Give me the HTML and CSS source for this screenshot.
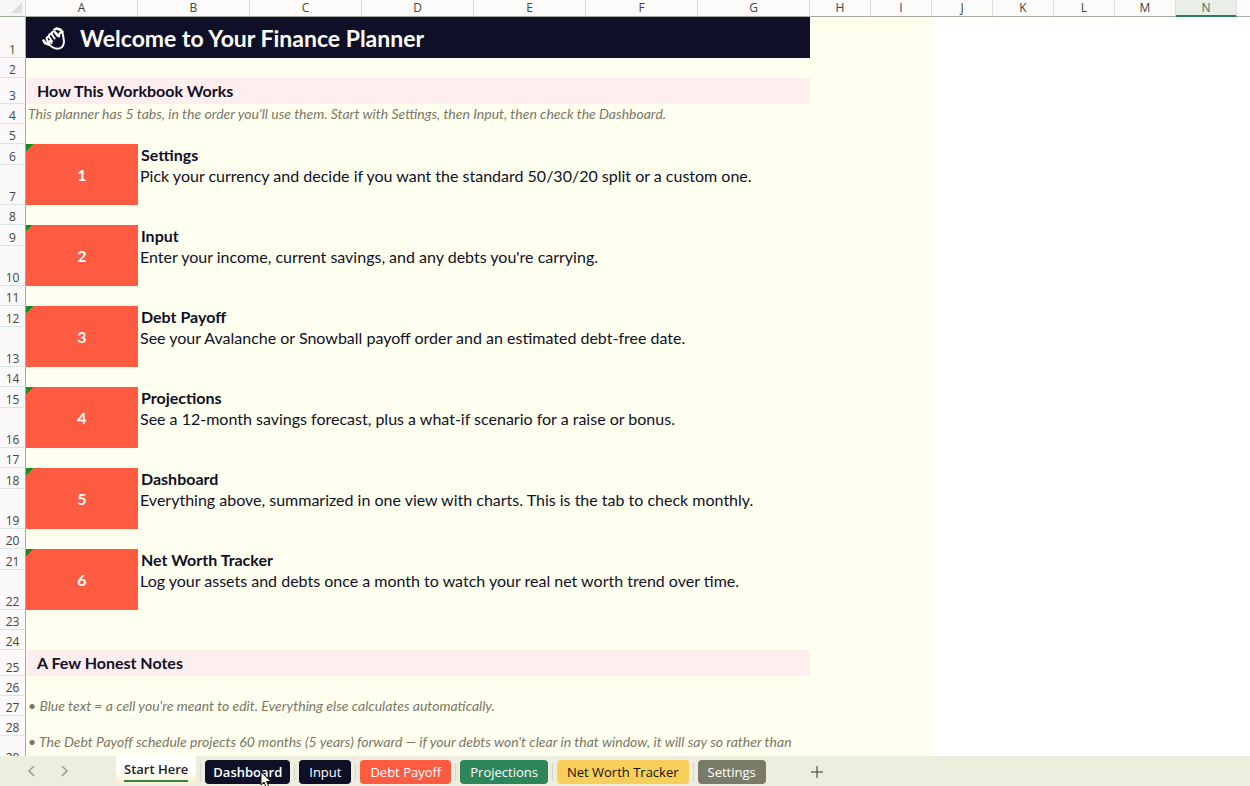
FILE: index.html
```html
<!DOCTYPE html>
<html lang="en">
<head>
    <meta charset="UTF-8">
    <meta name="viewport" content="width=device-width, initial-scale=1.0">
    <title>Finance Planner</title>
    <link rel="stylesheet" href="styles.css">
</head>
<body>
    <main class="sheet">
        <table>
            <colgroup>
                <col class="col-rows">
                <col class="col-wide" span="7">
                <col class="col-narrow" span="7">
                <col>
            </colgroup>
            <thead>
                <tr>
                    <th class="corner"></th>
                    <th>A</th>
                    <th>B</th>
                    <th>C</th>
                    <th>D</th>
                    <th>E</th>
                    <th>F</th>
                    <th>G</th>
                    <th>H</th>
                    <th>I</th>
                    <th>J</th>
                    <th>K</th>
                    <th>L</th>
                    <th>M</th>
                    <th class="selected">N</th>
                    <th></th>
                </tr>
            </thead>
            <tbody>
                <tr class="row-title">
                    <th>1</th>
                    <td class="title" colspan="7">
                        <div class="title-inner">
                            <svg class="wave" viewBox="0 0 24 24" width="24" height="24" aria-hidden="true">
                                <path d="M7 18L4.800 13.500C4 11.300 6 10 7.300 11.300C6 8.500 8.500 6.800 10 8.500C9 5.500 12 4.300 13.500 6.500L17 10.500C17 8 17.500 6.500 19.300 6.500C21 6.500 21 9 21.500 12C22.800 17 21.500 22.500 15.500 22.700C11.500 22.700 9 20.500 7 18Z" fill="#0f1028" stroke="#fff" stroke-width="2" stroke-linejoin="round"/>
                                <path d="M7.300 11.300L10 15.200M10 8.500L12.600 12.500M13 6.500L15.500 10M7.500 15L9.500 17" fill="none" stroke="#fff" stroke-width="2" stroke-linecap="round"/>
                                <path d="M12.500 3.500L14.500 2.500L18 3.500L20.500 6M1.500 14.500L3 17L7 18.500" fill="none" stroke="#fff" stroke-width="2.500" stroke-linecap="round" stroke-linejoin="round"/>
                            </svg>
                            <h1>Welcome to Your Finance Planner</h1>
                        </div>
                    </td>
                </tr>
                <tr><th>2</th></tr>
                <tr class="row-section">
                    <th>3</th>
                    <td class="section" colspan="7"><h2>How This Workbook Works</h2></td>
                </tr>
                <tr>
                    <th>4</th>
                    <td class="note" colspan="7">This planner has 5 tabs, in the order you'll use them. Start with Settings, then Input, then check the Dashboard.</td>
                </tr>
                <tr><th>5</th></tr>

                <tr class="row-name">
                    <th>6</th>
                    <td class="step" rowspan="2">1</td>
                    <td class="name" colspan="6">Settings</td>
                </tr>
                <tr class="row-text">
                    <th>7</th>
                    <td class="text" colspan="6">Pick your currency and decide if you want the standard 50/30/20 split or a custom one.</td>
                </tr>
                <tr><th>8</th></tr>

                <tr class="row-name">
                    <th>9</th>
                    <td class="step" rowspan="2">2</td>
                    <td class="name" colspan="6">Input</td>
                </tr>
                <tr class="row-text">
                    <th>10</th>
                    <td class="text" colspan="6">Enter your income, current savings, and any debts you're carrying.</td>
                </tr>
                <tr><th>11</th></tr>

                <tr class="row-name">
                    <th>12</th>
                    <td class="step" rowspan="2">3</td>
                    <td class="name" colspan="6">Debt Payoff</td>
                </tr>
                <tr class="row-text">
                    <th>13</th>
                    <td class="text" colspan="6">See your Avalanche or Snowball payoff order and an estimated debt-free date.</td>
                </tr>
                <tr><th>14</th></tr>

                <tr class="row-name">
                    <th>15</th>
                    <td class="step" rowspan="2">4</td>
                    <td class="name" colspan="6">Projections</td>
                </tr>
                <tr class="row-text">
                    <th>16</th>
                    <td class="text" colspan="6">See a 12-month savings forecast, plus a what-if scenario for a raise or bonus.</td>
                </tr>
                <tr><th>17</th></tr>

                <tr class="row-name">
                    <th>18</th>
                    <td class="step" rowspan="2">5</td>
                    <td class="name" colspan="6">Dashboard</td>
                </tr>
                <tr class="row-text">
                    <th>19</th>
                    <td class="text" colspan="6">Everything above, summarized in one view with charts. This is the tab to check monthly.</td>
                </tr>
                <tr><th>20</th></tr>

                <tr class="row-name">
                    <th>21</th>
                    <td class="step" rowspan="2">6</td>
                    <td class="name" colspan="6">Net Worth Tracker</td>
                </tr>
                <tr class="row-text">
                    <th>22</th>
                    <td class="text" colspan="6">Log your assets and debts once a month to watch your real net worth trend over time.</td>
                </tr>
                <tr><th>23</th></tr>
                <tr><th>24</th></tr>

                <tr class="row-section">
                    <th>25</th>
                    <td class="section" colspan="7"><h2>A Few Honest Notes</h2></td>
                </tr>
                <tr><th>26</th></tr>
                <tr>
                    <th>27</th>
                    <td class="note" colspan="7">• Blue text = a cell you're meant to edit. Everything else calculates automatically.</td>
                </tr>
                <tr><th>28</th></tr>
                <tr class="row-long">
                    <th>29</th>
                    <td class="note" colspan="7">• The Debt Payoff schedule projects 60 months (5 years) forward — if your debts won't clear in that window, it will say so rather than</td>
                </tr>
            </tbody>
        </table>
    </main>

    <nav class="tab-bar">
        <div class="arrows">
            <button aria-label="Previous sheet">
                <svg viewBox="0 0 10 12" width="10" height="12"><path d="M7 1L2 6L7 11"/></svg>
            </button>
            <button aria-label="Next sheet">
                <svg viewBox="0 0 10 12" width="10" height="12"><path d="M3 1L8 6L3 11"/></svg>
            </button>
        </div>
        <div class="tabs">
            <button class="tab active"><span>Start Here</span></button>
            <button class="tab navy hover">Dashboard
                <svg class="cursor" viewBox="0 0 12 18" width="12" height="18" aria-hidden="true">
                    <path d="M1 1V14L4 11L6.500 17L9 16L6.500 10.500H11Z" fill="#fffff0" stroke="#111"/>
                </svg>
            </button>
            <button class="tab navy">Input</button>
            <button class="tab coral">Debt Payoff</button>
            <button class="tab green">Projections</button>
            <button class="tab yellow">Net Worth Tracker</button>
            <button class="tab gray">Settings</button>
        </div>
        <button class="add" aria-label="New sheet">
            <svg viewBox="0 0 12 12" width="12" height="12"><path d="M6 0V12M0 6H12"/></svg>
        </button>
    </nav>
</body>
</html>
```
FILE: styles.css
```css
* {
    box-sizing: border-box;
    margin: 0;
    padding: 0;
}
body {
    height: 100vh;
    display: flex;
    flex-direction: column;
    overflow: hidden;
    background-color: #fff;
    color: #0f1028;
    font-family: Lato, sans-serif;
}
button {
    border: none;
    background: none;
    font-family: "Open Sans", sans-serif;
    cursor: pointer;
}

/* sheet */
.sheet {
    flex: 1;
    min-height: 0;
    overflow: hidden;
}
table {
    width: 100%;
    table-layout: fixed;
    border-collapse: separate;
    border-spacing: 0;
    /* columns A to I are filled */
    background: linear-gradient(#fffff0, #fffff0) no-repeat 0 0 / 932px 100%;
}
.col-rows {
    width: 26px;
}
.col-wide {
    width: 112px;
}
.col-narrow {
    width: 61px;
}
tr {
    height: 20px;
}
th {
    font-family: "Open Sans", sans-serif;
    font-size: 12px;
    font-weight: normal;
    color: #444;
}
thead tr {
    height: 17px;
}
thead th {
    background-color: #fdfafa;
    border-right: 1px solid #d9dedc;
    border-bottom: 1px solid #a3aba0;
    line-height: 16px;
}
thead th:last-child {
    border-right: none;
}
thead .corner {
    background: linear-gradient(135deg, transparent 50%, #dcdfdd 50%) no-repeat 12px 3px / 10px 10px #f6f6f6;
}
thead .selected {
    background-color: #e9eee8;
    border-bottom: 2px solid #2b7d54;
    color: #2b7d54;
    line-height: 15px;
}
tbody th {
    background-color: #fbf9f9;
    border-right: 1px solid #a5a8a5;
    border-bottom: 1px solid #dbe3e3;
    line-height: 14px;
    vertical-align: bottom;
}
.row-title {
    height: 41px;
}
.row-section {
    height: 26px;
}
.row-name {
    height: 21px;
}
.row-text {
    height: 40px;
}
.row-long {
    height: 30px;
}

/* cells */
.title {
    background-color: #0f1028;
    color: #fff;
    padding-left: 16px;
}
.title-inner {
    display: flex;
    align-items: center;
    gap: 14px;
}
h1 {
    font-size: 23px;
    line-height: 24px;
}
.section {
    background-color: #ffeeee;
    padding-left: 11px;
}
h2 {
    font-size: 16px;
    line-height: 20px;
}
.note {
    padding-left: 2px;
    color: #7a7768;
    font-size: 14px;
    font-style: italic;
    line-height: 20px;
    white-space: nowrap;
    vertical-align: top;
}
.row-long .note {
    line-height: 12px;
}
.step {
    background: linear-gradient(135deg, #1c8a1c 50%, transparent 50%) no-repeat 0 0 / 7px 7px #ff5b40;
    color: #fff;
    font-size: 16px;
    font-weight: bold;
    text-align: center;
}
.name {
    padding-left: 3px;
    font-size: 16px;
    font-weight: bold;
    line-height: 20px;
}
.text {
    padding-left: 2px;
    font-size: 16px;
    line-height: 22px;
    vertical-align: top;
}

/* tab bar */
.tab-bar {
    height: 30px;
    display: flex;
    align-items: flex-start;
    background-color: #eeeedf;
}
.arrows {
    width: 116px;
    height: 30px;
    display: flex;
    align-items: center;
    gap: 22px;
    padding-left: 27px;
}
.arrows button {
    display: flex;
}
.arrows path {
    fill: none;
    stroke: #9a9a92;
    stroke-width: 1.5;
}
.tabs {
    display: flex;
    gap: 9px;
}
.tab {
    position: relative;
    height: 24px;
    margin-top: 4px;
    padding: 0 10px;
    border-radius: 4px;
    font-size: 13px;
    line-height: 24px;
    white-space: nowrap;
    color: #fff;
}
.tab + .tab::before {
    content: "";
    position: absolute;
    left: -5px;
    top: 3px;
    height: 18px;
    border-left: 1px solid #d5d8cf;
}
.active {
    height: 28px;
    margin-top: 0;
    padding: 0 8px;
    background: linear-gradient(#fff 50%, #fbf3cf);
    border-radius: 0 0 4px 4px;
    color: #222;
    font-weight: 600;
}
.active span {
    display: block;
    border-bottom: 2px solid #3c7f42;
    line-height: 22px;
}
.navy {
    background-color: #0f1028;
}
.hover {
    padding: 0 8px;
    font-weight: 600;
}
.coral {
    background-color: #ff5b40;
}
.green {
    background-color: #2d855a;
}
.yellow {
    background-color: #f9cf5b;
    color: #111;
}
.gray {
    background-color: #7b7b6a;
}
.cursor {
    position: absolute;
    left: 55px;
    top: 11px;
    z-index: 1;
}
.add {
    display: flex;
    margin: 10px 0 0 45px;
}
.add path {
    stroke: #333;
}
```
